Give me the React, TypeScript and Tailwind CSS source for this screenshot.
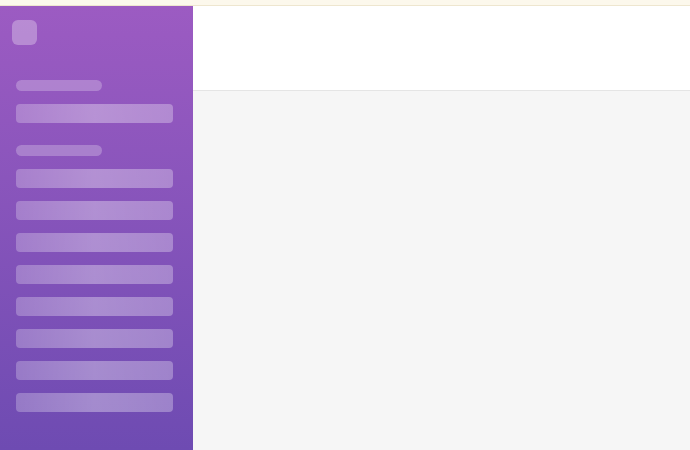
export default function App() {
  const items = [0, 1, 2, 3, 4, 5, 6, 7];

  return (
    <div className="flex flex-col h-[450px] w-[690px] overflow-hidden bg-[#f6f6f6] font-['Liberation_Sans',sans-serif]">
      {/* Top strip */}
      <div className="h-[6px] shrink-0 bg-[#fcf8ec] border-b border-[#eee6cf]" />

      <div className="flex flex-1 min-h-0">
        {/* Sidebar */}
        <aside className="w-[193px] shrink-0 bg-gradient-to-b from-[#9c5bc2] to-[#6e4bb2] px-4 pt-[14px]">
          <div className="-ml-1 h-[25px] w-[25px] rounded-md bg-white/30" />

          <div className="mt-[35px] h-[11px] w-[86px] rounded-full bg-white/25" />
          <div className="mt-[13px] h-[19px] w-[157px] rounded bg-gradient-to-r from-white/25 via-white/35 to-white/30" />

          <div className="mt-[22px] h-[11px] w-[86px] rounded-full bg-white/25" />
          <div className="mt-[13px] flex flex-col gap-[13px]">
            {items.map((i) => (
              <div
                key={i}
                className="h-[19px] w-[157px] rounded bg-gradient-to-r from-white/25 via-white/35 to-white/30"
              />
            ))}
          </div>
        </aside>

        {/* Main */}
        <main className="flex flex-1 flex-col">
          <div className="h-[85px] shrink-0 bg-white border-b border-[#e5e5e5]" />
          <div className="flex-1 bg-[#f6f6f6]" />
        </main>
      </div>
    </div>
  );
}
